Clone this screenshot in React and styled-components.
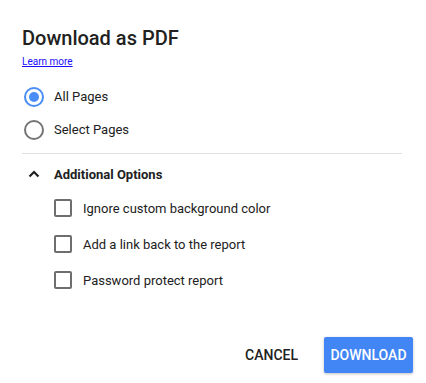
import React, { useState } from "react";
import styled, { createGlobalStyle } from "styled-components";

const Global = createGlobalStyle`
html, body {
  margin: 0;
  padding: 0;
  background: #fff;
}
body {
  font-family: Roboto, "Liberation Sans", sans-serif;
  color: #212121;
}
`

const Dialog = styled.div`
width: 426px;
height: 383px;
box-sizing: border-box;
background: #fff;
display: flex;
flex-direction: column;
`

const Content = styled.div`
padding: 26px 24px 0 22px;
display: flex;
flex-direction: column;
`

const Title = styled.h2`
margin: 0;
font-size: 20px;
line-height: 24px;
font-weight: 500;
color: #212121;
`

const LearnMore = styled.a`
margin-top: 5px;
font-size: 10px;
line-height: 14px;
color: #1a0dff;
text-decoration: underline;
align-self: flex-start;
cursor: pointer;
`

const RadioGroup = styled.div`
margin-top: 11px;
display: flex;
flex-direction: column;
`

const RadioRow = styled.label`
height: 33px;
display: flex;
align-items: center;
font-size: 13px;
color: #212121;
cursor: pointer;
`

const RadioCircle = styled.span`
width: 20px;
height: 20px;
box-sizing: border-box;
margin-left: 2px;
margin-right: 10px;
border-radius: 50%;
border: 2px solid ${props => (props.checked ? "#4a8ef5" : "#757575")};
display: flex;
align-items: center;
justify-content: center;
&::after {
  content: "";
  width: 10px;
  height: 10px;
  border-radius: 50%;
  background: #4a8ef5;
  display: ${props => (props.checked ? "block" : "none")};
}
`

const Divider = styled.hr`
margin: 7px 0 0 0;
border: none;
height: 1px;
background: #e0e0e0;
`

const SectionHeader = styled.div`
margin-top: 4px;
height: 32px;
display: flex;
align-items: center;
font-size: 13px;
font-weight: 700;
color: #212121;
svg {
  margin-left: 6px;
  margin-right: 14px;
}
`

const Options = styled.div`
display: flex;
flex-direction: column;
padding-left: 32px;
`

const CheckRow = styled.label`
height: 36px;
display: flex;
align-items: center;
font-size: 13px;
color: #212121;
cursor: pointer;
`

const CheckBox = styled.span`
width: 18px;
height: 18px;
box-sizing: border-box;
border: 2px solid #6e6e6e;
border-radius: 2px;
margin-right: 11px;
`

const Actions = styled.div`
margin-top: auto;
padding: 0 13px 10px 0;
display: flex;
justify-content: flex-end;
align-items: center;
gap: 18px;
`

const Button = styled.button`
height: 36px;
padding: 0 ${props => (props.primary ? "5px" : "8px")};
border: none;
border-radius: 2px;
font-family: Roboto, "Liberation Sans", sans-serif;
font-size: 14px;
font-weight: 500;
background: ${props => (props.primary ? "#4285f4" : "transparent")};
color: ${props => (props.primary ? "#fff" : "#212121")};
box-shadow: ${props => (props.primary ? "0 1px 3px rgba(0,0,0,0.25)" : "none")};
min-width: ${props => (props.primary ? "89px" : "auto")};
cursor: pointer;
`

function Chevron() {
  return (
    <svg width="12" height="8" viewBox="0 0 12 8">
      <path d="M1.5 6.5 L6 2 L10.5 6.5" fill="none" stroke="#212121" strokeWidth="2.2" />
    </svg>
  );
}

function App() {
  const [page, setPage] = useState("all");
  const options = [
    "Ignore custom background color",
    "Add a link back to the report",
    "Password protect report",
  ];
  return (
    <>
      <Global />
      <Dialog>
        <Content>
          <Title>Download as PDF</Title>
          <LearnMore>Learn more</LearnMore>
          <RadioGroup>
            <RadioRow onClick={() => setPage("all")}>
              <RadioCircle checked={page === "all"} />
              All Pages
            </RadioRow>
            <RadioRow onClick={() => setPage("select")}>
              <RadioCircle checked={page === "select"} />
              Select Pages
            </RadioRow>
          </RadioGroup>
          <Divider />
          <SectionHeader>
            <Chevron />
            Additional Options
          </SectionHeader>
          <Options>
            {options.map((o) => (
              <CheckRow key={o}>
                <CheckBox />
                {o}
              </CheckRow>
            ))}
          </Options>
        </Content>
        <Actions>
          <Button>CANCEL</Button>
          <Button primary>DOWNLOAD</Button>
        </Actions>
      </Dialog>
    </>
  );
}

export default App;
